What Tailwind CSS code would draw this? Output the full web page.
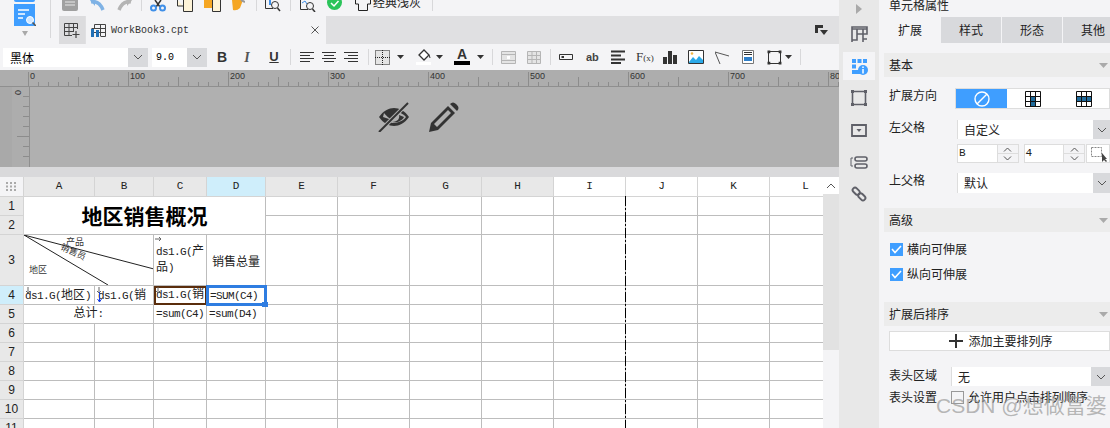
<!DOCTYPE html>
<html lang="zh">
<head>
    <meta charset="UTF-8">
    <title>WorkBook3.cpt</title>
    <script src="https://cdn.jsdelivr.net/npm/@tailwindcss/browser@4"></script>
</head>
<body class="w-[1110px] h-[428px] overflow-hidden bg-[#f4f4f6] text-[#222] font-['Noto_Sans_CJK_SC',sans-serif]">
<div class="relative flex h-[428px]">

    <!-- left: toolbars, ruler, sheet -->
    <div class="w-[839px] flex flex-col shrink-0">
        <div class="flex h-[44px]">
            <!-- logo column -->
            <div class="w-[59px] relative shrink-0">
                <div class="w-[21px] h-[2px] ml-[14px] bg-[#3f9eff] rounded-b-sm"></div>
                <svg class="ml-[14px] mt-[2px]" width="22" height="22" viewBox="0 0 22 22">
                    <path d="M0 0H21V22H0z" fill="#3f9eff"/>
                    <path d="M4 6H15M4 10H11M4 14H9" stroke="#fff" stroke-width="1.5"/>
                    <circle cx="16" cy="16" r="3.5" fill="#cfe6ff" stroke="#fff"/>
                    <path d="M18.5 18.5L22 22" stroke="#555" stroke-width="1.5"/>
                </svg>
                <svg class="ml-[21px] mt-[5px]" width="8" height="5"><path d="M1 0H7L4 5z" fill="#a9a9a9"/></svg>
                <div class="absolute left-[50px] top-0 w-px h-[38px] bg-[#d8d8da]"></div>
            </div>
            <div class="flex-1 flex flex-col">
                <!-- top icons, cut by the window edge -->
                <div class="h-[16px] flex items-start overflow-hidden text-[12px] leading-[10px]">
                    <svg class="ml-[3px]" width="16" height="11"><path d="M0 0H16V9Q16 11 14 11H2Q0 11 0 9z" fill="#a0a0a0"/><path d="M3 2H13M3 5H13" stroke="#e8e8e8"/></svg>
                    <svg class="ml-[12px]" width="15" height="11"><path d="M1 2Q9 0 13 10" fill="none" stroke="#7fb2e5" stroke-width="3.5"/><path d="M0 0H5V6z" fill="#7fb2e5"/></svg>
                    <svg class="ml-[12px]" width="15" height="11"><path d="M14 2Q6 0 2 10" fill="none" stroke="#b4b4b4" stroke-width="3.5"/><path d="M15 0H10V6z" fill="#b4b4b4"/></svg>
                    <div class="ml-[9px] w-px h-[11px] bg-[#d8d8da]"></div>
                    <svg class="ml-[8px]" width="16" height="12"><path d="M5 0L10 7M11 0L6 7" stroke="#333" stroke-width="1.5"/><circle cx="3.5" cy="8" r="2.5" fill="none" stroke="#3f8fe8" stroke-width="2"/><circle cx="12.5" cy="8" r="2.5" fill="none" stroke="#3f8fe8" stroke-width="2"/></svg>
                    <svg class="ml-[11px]" width="16" height="12"><path d="M.5 0V6H6M6.5 0V11.5H15.5V0" fill="#fdf3d8" stroke="#333"/></svg>
                    <svg class="ml-[11px]" width="17" height="12"><path d="M0 0H9V8H0z" fill="#f5a623"/><path d="M8.5 0V11.5H16.5V0" fill="#fdf3d8" stroke="#333"/></svg>
                    <svg class="ml-[10px]" width="14" height="11"><path d="M1 0H12L9 8Q6 11 2 10z" fill="#f5a623"/><path d="M10 0L14 2" stroke="#999" stroke-width="2"/></svg>
                    <div class="ml-[11px] w-px h-[11px] bg-[#d8d8da]"></div>
                    <svg class="ml-[8px]" width="16" height="12"><path d="M.5 0V8.5H8" fill="none" stroke="#333"/><path d="M5 0V5" stroke="#3f8fe8" stroke-width="2"/><circle cx="10" cy="5" r="3.5" fill="none" stroke="#333"/><path d="M12.5 8L15 11" stroke="#333" stroke-width="1.5"/></svg>
                    <div class="ml-[9px] w-px h-[11px] bg-[#d8d8da]"></div>
                    <svg class="ml-[9px]" width="16" height="12"><path d="M.5 0V9.5H8" fill="none" stroke="#333"/><path d="M2 3L5 1L7 4" fill="none" stroke="#3f8fe8"/><circle cx="10" cy="6" r="3.5" fill="none" stroke="#333"/><path d="M12.5 9L15 12" stroke="#333" stroke-width="1.5"/></svg>
                    <svg class="ml-[11px]" width="15" height="11"><circle cx="7.5" cy="2.5" r="7.5" fill="#2bc45a"/><path d="M4 3L7 6L11.5 1" fill="none" stroke="#fff" stroke-width="1.5"/></svg>
                    <svg class="ml-[13px]" width="16" height="11"><path d="M.5 0V4H3.5V10.5H12.5V4H15.5V0" fill="none" stroke="#222"/></svg>
                    <span class="ml-[2px] -mt-[3px] whitespace-nowrap">经典浅灰</span>
                    <div class="ml-[11px] w-px h-[11px] bg-[#d8d8da]"></div>
                </div>
                <!-- tab bar -->
                <div class="h-[28px] bg-[#e0e0e2] flex items-stretch">
                    <div class="w-[26px] bg-[#dcdcde] flex items-center justify-center">
                        <svg width="16" height="15"><path d="M.5 .5H13.5V6M.5 .5V12.5H8M.5 4.5H13.5M.5 8.5H9M5 .5V12.5M9.5 .5V9" fill="none" stroke="#444"/><path d="M12 8V15M8.5 11.5H15.5" stroke="#444" stroke-width="1.2"/></svg>
                    </div>
                    <div class="w-[240px] ml-px bg-[#f4f4f6] flex items-center pl-[5px]">
                        <svg width="15" height="13"><path d="M3.5 .5H14.5V12.5H10M3.5 .5V5M.5 4.5H14.5M.5 8.5H14.5M9.5 .5V12.5" fill="none" stroke="#444"/><path d="M0 5H3V13H0zM5 6H8V13H5z" fill="#1f6fb5"/></svg>
                        <span class="ml-[5px] text-[10px] font-['Liberation_Mono',monospace] text-[#333]">WorkBook3.cpt</span>
                        <svg class="ml-auto mr-[7px]" width="8" height="8"><path d="M.5 .5L7.5 7.5M7.5 .5L.5 7.5" stroke="#555"/></svg>
                    </div>
                    <svg class="ml-auto mr-[11px] mt-[9px]" width="13" height="11"><path d="M0 0H8V3H3V8H0z" fill="#333"/><path d="M5 5H13L9 10z" fill="#333"/></svg>
                </div>
            </div>
        </div>

        <!-- format toolbar -->
        <div class="h-[26px] flex items-center text-[#333]">
            <div class="ml-[3px] w-[145px] h-[19px] flex bg-white">
                <span class="flex-1 pl-[7px] text-[12px] leading-[19px] text-black">黑体</span>
                <div class="w-[20px] bg-[#d8d9dc] flex items-center justify-center"><svg width="10" height="6"><path d="M1 1L5 5L9 1" fill="none" stroke="#555"/></svg></div>
            </div>
            <div class="ml-[4px] w-[55px] h-[19px] flex bg-white">
                <span class="flex-1 pl-[4px] text-[10px] leading-[19px] text-black font-['Liberation_Mono',monospace]">9.0</span>
                <div class="w-[20px] bg-[#d8d9dc] flex items-center justify-center"><svg width="10" height="6"><path d="M1 1L5 5L9 1" fill="none" stroke="#555"/></svg></div>
            </div>
            <span class="ml-[9px] w-[12px] text-center text-[14px] font-bold font-['Liberation_Sans',sans-serif]">B</span>
            <span class="ml-[13px] w-[12px] text-center text-[14px] italic font-bold text-[#555] font-['Liberation_Serif',serif]">I</span>
            <span class="ml-[15px] w-[12px] text-center text-[13px] font-bold underline font-['Liberation_Sans',sans-serif]">U</span>
            <div class="ml-[10px] w-px h-[16px] bg-[#d8d8da]"></div>
            <svg class="ml-[9px]" width="14" height="12"><path d="M0 1.5H14M0 4.5H10M0 7.5H14M0 10.5H10" stroke="#333"/></svg>
            <svg class="ml-[8px]" width="14" height="12"><path d="M0 1.5H14M2 4.5H12M0 7.5H14M2 10.5H12" stroke="#333"/></svg>
            <svg class="ml-[8px]" width="14" height="12"><path d="M0 1.5H14M4 4.5H14M0 7.5H14M4 10.5H14" stroke="#333"/></svg>
            <div class="ml-[10px] w-px h-[16px] bg-[#d8d8da]"></div>
            <svg class="ml-[6px]" width="15" height="15"><path d="M0 0H15V15H0z" fill="#e4e4e4"/><path d="M.5 .5H14.5V14.5H.5zM7.5 0V15M0 7.5H15" fill="none" stroke="#222" stroke-dasharray="1 1"/></svg>
            <svg class="ml-[7px]" width="7" height="4"><path d="M0 0H7L3.5 4z" fill="#333"/></svg>
            <svg class="ml-[12px]" width="15" height="16"><path d="M3 6L8 1L13 6L8 11z" fill="#fff" stroke="#333" stroke-width="1.3"/><path d="M11 4Q14 6 14 9" fill="none" stroke="#333"/><path d="M0 13H15V16H0z" fill="#fff"/></svg>
            <svg class="ml-[5px]" width="7" height="4"><path d="M0 0H7L3.5 4z" fill="#333"/></svg>
            <div class="ml-[11px] w-[16px] flex flex-col items-center">
                <span class="text-[14px] leading-[11px] font-bold font-['Liberation_Sans',sans-serif]">A</span>
                <div class="mt-[1px] w-[16px] h-[4px] bg-black"></div>
            </div>
            <svg class="ml-[7px]" width="7" height="4"><path d="M0 0H7L3.5 4z" fill="#333"/></svg>
            <div class="ml-[8px] w-px h-[16px] bg-[#d8d8da]"></div>
            <svg class="ml-[8px]" width="15" height="13"><path d="M.5 .5H14.5V12.5H.5zM0 3.5H15M0 9.5H15" fill="#e4e4e4" stroke="#b5b5b5"/><path d="M6 5H9V8H6z" fill="#fff"/></svg>
            <svg class="ml-[11px]" width="14" height="13"><path d="M.5 .5H13.5V12.5H.5zM0 4.5H14M0 8.5H14M5 0V13M9.5 0V13" fill="#e4e4e4" stroke="#b5b5b5"/></svg>
            <div class="ml-[9px] w-px h-[16px] bg-[#d8d8da]"></div>
            <svg class="ml-[8px]" width="14" height="6"><path d="M.5 .5H13.5V5.5H.5z" fill="none" stroke="#333"/><path d="M2.5 2H5V4H2.5z" fill="#333"/></svg>
            <span class="ml-[13px] w-[12px] text-[11px] leading-[12px] font-bold text-[#444] font-['Liberation_Sans',sans-serif]">ab</span>
            <svg class="ml-[13px]" width="14" height="14"><path d="M0 1.5H14M0 5.5H10M0 9.5H14M0 13H10" stroke="#333" stroke-width="2"/></svg>
            <span class="ml-[11px] w-[16px] text-[13px] leading-[14px] whitespace-nowrap text-[#333] font-['Liberation_Serif',serif]">F<span class="text-[9px]">(x)</span></span>
            <svg class="ml-[11px]" width="14" height="13"><path d="M0 6H4V13H0zM5 0H9V13H5zM10 4H14V13H10z" fill="#333"/></svg>
            <svg class="ml-[11px]" width="16" height="14"><path d="M.5 .5H15.5V13.5H.5z" fill="#fff" stroke="#333"/><path d="M1 12L5 7L8 10L11 6L15 10V13H1z" fill="#2ba9e8"/><circle cx="4" cy="3.5" r="1.3" fill="#f5b642"/></svg>
            <svg class="ml-[11px]" width="14" height="13"><path d="M0 1L14 5M0 1L5 13" fill="none" stroke="#555"/></svg>
            <svg class="ml-[13px]" width="12" height="14"><path d="M.5 .5H11.5V13.5H.5z" fill="#fff" stroke="#777"/><path d="M2 2.5H10M2 4.5H10" stroke="#333"/><path d="M2 7H10V11H2z" fill="#2f7fc9"/></svg>
            <svg class="ml-[13px]" width="15" height="15"><path d="M1.5 1.5H13.5V13.5H1.5z" fill="none" stroke="#333"/><path d="M0 0H3V3H0zM12 0H15V3H12zM0 12H3V15H0zM12 12H15V15H12z" fill="#333" transform="translate(.5 .5) scale(.93)"/></svg>
            <svg class="ml-[3px]" width="7" height="4"><path d="M0 0H7L3.5 4z" fill="#333"/></svg>
            <div class="ml-[8px] w-px h-[16px] bg-[#d8d8da]"></div>
        </div>

        <!-- horizontal ruler -->
        <div class="relative h-[17px] bg-[#adadad] border-b border-[#8f8f8f] flex pl-[29px] overflow-hidden text-[9px] leading-[13px] text-[#333] font-['Liberation_Sans',sans-serif]">
            <svg class="absolute left-[28px] top-0" width="811" height="17">
                <defs>
                    <pattern id="ticks" width="100" height="17" patternUnits="userSpaceOnUse">
                        <path d="M.5 2V17M10.5 12V17M20.5 12V17M30.5 12V17M40.5 12V17M50.5 7V17M60.5 12V17M70.5 12V17M80.5 12V17M90.5 12V17" stroke="#8c8c8c"/>
                    </pattern>
                </defs>
                <rect width="811" height="17" fill="url(#ticks)"/>
            </svg>
            <span class="relative w-[100px] shrink-0 pl-[1px]">0</span>
            <span class="relative w-[100px] shrink-0 pl-[1px]">100</span>
            <span class="relative w-[100px] shrink-0 pl-[1px]">200</span>
            <span class="relative w-[100px] shrink-0 pl-[1px]">300</span>
            <span class="relative w-[100px] shrink-0 pl-[1px]">400</span>
            <span class="relative w-[100px] shrink-0 pl-[1px]">500</span>
            <span class="relative w-[100px] shrink-0 pl-[1px]">600</span>
            <span class="relative w-[100px] shrink-0 pl-[1px]">700</span>
            <span class="relative w-[10px] shrink-0 pl-[1px] overflow-hidden">80</span>
        </div>

        <!-- report header area -->
        <div class="h-[80px] flex bg-[#b0b0b0]">
            <div class="w-[12px] bg-[#a9a9a9]"></div>
            <div class="w-[18px] bg-[#adadad] border-r border-[#8f8f8f] relative text-[9px] leading-[9px] text-[#333] font-['Liberation_Sans',sans-serif]">
                <span class="absolute left-[3px] top-[1px] rotate-90">0</span>
                <svg class="absolute left-0 top-0" width="17" height="80"><path d="M11 10H17M11 20H17M11 30H17M11 40H17M5 50H17M11 60H17M11 70H17" stroke="#8c8c8c" transform="translate(0 -.5)"/></svg>
            </div>
            <div class="flex-1 flex items-start pl-[348px] pt-[15px] gap-[19px]">
                <svg width="32" height="30" viewBox="0 0 32 30">
                    <path d="M1 15C5 9 11 6 16 6s11 3 15 9c-4 6-10 9-15 9S5 21 1 15z" fill="#333"/>
                    <path d="M20 10C24 11 26 13 28 15C25 19 20 21 13 21z" fill="#b0b0b0"/>
                    <path d="M21 13C22 16 20 20 14 20C19 21 24 19 26 15z" fill="#333"/>
                    <path d="M6 11C8 13 10 16 14 18L5 15z" fill="#b0b0b0"/>
                    <path d="M2 29L30 1" stroke="#b0b0b0" stroke-width="4"/>
                    <path d="M1 30L30 1" stroke="#333" stroke-width="2"/>
                </svg>
                <svg width="30" height="30" viewBox="0 0 30 30">
                    <path d="M0 30L2 21L19 4L26 11L9 28z" fill="#333"/>
                    <path d="M5 22L19 8L22 11L8 25z" fill="#b0b0b0"/>
                    <path d="M21 2Q24 -1 27 2L28 3Q31 6 28 9z" fill="#333"/>
                </svg>
            </div>
        </div>
        <div class="h-[10px] bg-[#d9d9db]"></div>

        <!-- sheet -->
        <div class="relative h-[251px] flex overflow-hidden bg-white">
            <div class="relative w-[823px] overflow-hidden shrink-0">
                <div id="sheet" class="grid w-[842px] grid-cols-[24px_71px_59px_53px_59px_72px_72px_72px_72px_72px_72px_72px_72px] grid-rows-[20px_19px_19px_51px_19px_19px_19px_19px_19px_19px_19px_19px] text-[11px] leading-[13px] text-[#222] font-['Liberation_Mono','Noto_Sans_CJK_SC',monospace]"></div>
                <svg class="absolute left-[625px] top-[19px]" width="2" height="232"><path d="M.5 0V232" stroke="#000" stroke-width="1" stroke-dasharray="10 2 2 2"/></svg>
            </div>
            <div class="w-[16px] bg-[#f4f4f6]">
                <div class="h-[17px] bg-white flex items-center justify-center"><svg width="10" height="6"><path d="M1 5L5 1L9 5" fill="none" stroke="#555"/></svg></div>
                <div class="h-[156px] bg-[#e2e2e2]"></div>
            </div>
        </div>
    </div>

    <!-- icon strip -->
    <div class="w-[40px] shrink-0 bg-[#e8e8e8] flex flex-col items-center text-[#5f6068]">
        <div class="h-[18px] flex items-center"><svg width="6" height="10"><path d="M0 0L6 5L0 10z" fill="#a9a9a9"/></svg></div>
        <div class="h-[32px] flex items-center">
            <svg width="17" height="17"><path d="M1 1H16V3H1zM1 3V16M6 3V14H1M6 8H12M12 3V16M12 8H16V3M12 13H16" fill="none" stroke="#5f6068" stroke-width="1.6"/></svg>
        </div>
        <div class="h-[32px] flex items-center">
            <div class="w-[32px] h-[28px] bg-[#f4f4f6] flex items-center justify-center">
                <svg width="17" height="17"><path d="M1 1H5V5H1zM6.5 1H10.5V5H6.5zM12 1H16V5H12zM1 6.5H5V10.5H1zM1 12H9V16H1z" fill="#3f9eff"/><circle cx="12" cy="12" r="5" fill="#3f9eff"/><path d="M12 8.5V10M12 11V15.5" stroke="#fff" stroke-width="1.5"/></svg>
            </div>
        </div>
        <div class="h-[32px] flex items-center">
            <svg width="16" height="16"><path d="M1.5 1.5H14.5V14.5H1.5z" fill="none" stroke="#5f6068" stroke-width="1.6"/><path d="M0 0H3V3H0zM13 0H16V3H13zM0 13H3V16H0zM13 13H16V16H13z" fill="#5f6068"/></svg>
        </div>
        <div class="h-[32px] flex items-center">
            <svg width="16" height="13"><path d="M1 1H15V12H1z" fill="none" stroke="#5f6068" stroke-width="1.8"/><path d="M5.5 5H10.5L8 8z" fill="#5f6068"/></svg>
        </div>
        <div class="h-[32px] flex items-center">
            <svg width="18" height="13"><path d="M3 2H1V10H3" fill="none" stroke="#5f6068"/><rect x="5" y="1" width="12" height="4" rx="2" fill="none" stroke="#5f6068" stroke-width="1.6"/><rect x="5" y="8" width="12" height="4" rx="2" fill="none" stroke="#5f6068" stroke-width="1.6"/></svg>
        </div>
        <div class="h-[32px] flex items-center">
            <svg width="16" height="16" viewBox="-2 -2 20 20"><g fill="none" stroke="#5f6068" stroke-width="2.4" transform="rotate(45 8 8)"><rect x="-2" y="5" width="10" height="6" rx="3"/><rect x="8" y="5" width="10" height="6" rx="3"/></g></svg>
        </div>
    </div>

    <!-- properties panel -->
    <div class="w-[231px] shrink-0 text-[12px] leading-[18px] text-[#222] overflow-hidden">
        <div class="h-[17px] pl-[10px] -mt-[5px] mb-[5px] leading-[18px] pt-px">单元格属性</div>
        <div class="h-[26px] flex text-center leading-[26px]">
            <div class="w-[62px] shrink-0">扩展</div>
            <div class="w-[60px] shrink-0 bg-[#d8d9dc]">样式</div>
            <div class="w-[60px] shrink-0 ml-px bg-[#d8d9dc]">形态</div>
            <div class="w-[60px] shrink-0 ml-px bg-[#d8d9dc]">其他</div>
        </div>

        <div class="mt-[10px] ml-[5px] h-[24px] bg-[#ececec] flex items-center justify-between pl-[5px] pr-[2px]">
            <span>基本</span><svg width="9" height="5"><path d="M0 0H9L4.5 5z" fill="#aaa"/></svg>
        </div>
        <div class="mt-[11px] pl-[10px] flex items-start">
            <span class="w-[68px] leading-[14px]">扩展方向</span>
            <div class="flex-1 h-[21px] flex border border-[#ddd] bg-white">
                <div class="w-[51px] bg-[#3f9eff] flex items-center justify-center">
                    <svg width="16" height="16"><circle cx="8" cy="8" r="7" fill="none" stroke="#fff" stroke-width="1.4"/><path d="M3 13L13 3" stroke="#fff" stroke-width="1.4"/></svg>
                </div>
                <div class="w-[51px] flex items-center justify-center">
                    <svg width="16" height="16"><path d="M5 5H11V15H5z" fill="#1f6b9c"/><path d="M.5 .5H15.5V15.5H.5zM.5 5.5H15.5M.5 10.5H15.5M5.5 .5V15.5M10.5 .5V15.5" fill="none" stroke="#111"/></svg>
                </div>
                <div class="w-[51px] flex items-center justify-center">
                    <svg width="16" height="16"><path d="M1 5H15V11H1z" fill="#1f6b9c"/><path d="M.5 .5H15.5V15.5H.5zM.5 5.5H15.5M.5 10.5H15.5M5.5 .5V15.5M10.5 .5V15.5" fill="none" stroke="#111"/></svg>
                </div>
            </div>
        </div>
        <div class="mt-[11px] pl-[10px] flex items-start">
            <span class="w-[68px] leading-[14px]">左父格</span>
            <div class="flex-1 h-[19px] flex bg-white border-l border-[#ddd]">
                <span class="flex-1 pl-[6px] leading-[19px]">自定义</span>
                <div class="w-[17px] bg-[#d8d9dc] flex items-center justify-center"><svg width="10" height="6"><path d="M1 1L5 5L9 1" fill="none" stroke="#555"/></svg></div>
            </div>
        </div>
        <div class="mt-[5px] pl-[78px] flex h-[19px] text-[11px] font-['Liberation_Mono',monospace]">
            <div class="w-[41px] bg-white border border-[#ddd] pl-px leading-[17px]">B</div>
            <div class="w-[21px] flex flex-col border-y border-r border-[#ddd] bg-[#f4f4f6]">
                <div class="flex-1 flex items-center justify-center"><svg width="9" height="5"><path d="M1 4.5L4.5 1L8 4.5" fill="none" stroke="#555"/></svg></div>
                <div class="flex-1 flex items-center justify-center border-t border-[#ddd]"><svg width="9" height="5"><path d="M1 .5L4.5 4L8 .5" fill="none" stroke="#555"/></svg></div>
            </div>
            <div class="ml-[5px] w-[41px] bg-white border border-[#ddd] pl-px leading-[17px]">4</div>
            <div class="w-[21px] flex flex-col border-y border-r border-[#ddd] bg-[#f4f4f6]">
                <div class="flex-1 flex items-center justify-center"><svg width="9" height="5"><path d="M1 4.5L4.5 1L8 4.5" fill="none" stroke="#555"/></svg></div>
                <div class="flex-1 flex items-center justify-center border-t border-[#ddd]"><svg width="9" height="5"><path d="M1 .5L4.5 4L8 .5" fill="none" stroke="#555"/></svg></div>
            </div>
            <div class="ml-px flex-1 bg-white border border-[#ddd] pl-[4px] pt-[2px]">
                <svg width="18" height="15"><path d="M.5 .5H10.5V9.5H.5z" fill="none" stroke="#888" stroke-dasharray="2 1"/><path d="M11 6V15L13 13L15 15L16 14L14 12H16z" fill="#444"/></svg>
            </div>
        </div>
        <div class="mt-[10px] pl-[10px] flex items-start">
            <span class="w-[68px] leading-[14px]">上父格</span>
            <div class="flex-1 h-[20px] flex bg-white border-l border-[#ddd]">
                <span class="flex-1 pl-[6px] leading-[20px]">默认</span>
                <div class="w-[17px] bg-[#d8d9dc] flex items-center justify-center"><svg width="10" height="6"><path d="M1 1L5 5L9 1" fill="none" stroke="#555"/></svg></div>
            </div>
        </div>

        <div class="mt-[15px] ml-[5px] h-[24px] bg-[#ececec] flex items-center justify-between pl-[5px] pr-[2px]">
            <span>高级</span><svg width="9" height="5"><path d="M0 0H9L4.5 5z" fill="#aaa"/></svg>
        </div>
        <div class="mt-[7px] h-[20px] pl-[11px] flex items-center gap-[4px]">
            <div class="w-[13px] h-[13px] bg-[#3f9eff] flex items-center justify-center"><svg width="11" height="9"><path d="M1 4L4 7.5L10 1" fill="none" stroke="#fff" stroke-width="1.6"/></svg></div>
            <span>横向可伸展</span>
        </div>
        <div class="mt-[5px] h-[20px] pl-[11px] flex items-center gap-[4px]">
            <div class="w-[13px] h-[13px] bg-[#3f9eff] flex items-center justify-center"><svg width="11" height="9"><path d="M1 4L4 7.5L10 1" fill="none" stroke="#fff" stroke-width="1.6"/></svg></div>
            <span>纵向可伸展</span>
        </div>

        <div class="mt-[18px] ml-[5px] h-[24px] bg-[#ececec] flex items-center justify-between pl-[5px] pr-[2px]">
            <span>扩展后排序</span><svg width="9" height="5"><path d="M0 0H9L4.5 5z" fill="#aaa"/></svg>
        </div>
        <div class="mt-[5px] ml-[10px] h-[20px] bg-white border border-[#ddd] flex items-center justify-center gap-[5px] pl-[3px]">
            <svg width="14" height="14"><path d="M7 0V14M0 7H14" stroke="#333" stroke-width="2"/></svg>
            <span>添加主要排列序</span>
        </div>
        <div class="mt-[16px] pl-[10px] flex items-start">
            <span class="w-[62px] leading-[16px]">表头区域</span>
            <div class="flex-1 h-[19px] flex bg-white border-l border-[#ddd]">
                <span class="flex-1 pl-[6px] leading-[19px]">无</span>
                <div class="w-[19px] bg-[#d8d9dc] flex items-center justify-center"><svg width="10" height="6"><path d="M1 1L5 5L9 1" fill="none" stroke="#555"/></svg></div>
            </div>
        </div>
        <div class="mt-[2px] pl-[10px] flex items-center">
            <span class="w-[62px]">表头设置</span>
            <div class="w-[13px] h-[13px] border border-[#999] bg-[#f4f4f6]"></div>
            <span class="ml-[4px] whitespace-nowrap">允许用户点击排列顺序</span>
        </div>
    </div>

    <!-- watermark -->
    <div class="absolute left-[936px] top-[392px] text-[21px] leading-[28px] whitespace-nowrap text-[#9a9a9a]/70 font-['Liberation_Sans','Noto_Sans_CJK_SC',sans-serif]">CSDN @想做富婆</div>
</div>

<script>
    // las clases van completas para que Tailwind las vea
    const cell = 'relative border-r border-b border-[#bdbdbd] overflow-hidden whitespace-nowrap';
    const mono = 'tracking-[-0.6px]';
    const blanco = `<div class="${cell}"></div>`;
    const vacias = n => blanco.repeat(n);
    const cjk = t => `<span class="text-[12px] tracking-normal">${t}</span>`;
    const cabCol = (t, fondo) => `<div class="${fondo} border-r border-b border-[#d4d4d4] flex items-center justify-center">${t}</div>`;
    const cabFila = (t, fondo) => `<div class="${fondo} border-r border-b border-[#d4d4d4] flex items-center justify-center text-[12px] font-['Liberation_Sans',sans-serif]">${t}</div>`;

    const flecha = '<svg class="absolute left-[1px] top-[1px]" width="7" height="7"><path d="M3 0V6M1 4L3 6L5 4" fill="none" stroke="#666"/></svg>';
    const flechaDer = '<svg class="absolute left-[1px] top-[1px]" width="7" height="6"><path d="M0 3H6M4 1L6 3L4 5" fill="none" stroke="#666"/></svg>';

    let html = `<div class="bg-[#f4f4f6] border-r border-b border-[#d4d4d4] flex items-center justify-center">
        <svg width="11" height="9"><path d="M0 0H2V2H0zM4 0H6V2H4zM8 0H10V2H8zM0 3.5H2V5.5H0zM4 3.5H6V5.5H4zM8 3.5H10V5.5H8zM0 7H2V9H0zM4 7H6V9H4zM8 7H10V9H8z" fill="#aaa"/></svg></div>`;
    'ABC'.split('').forEach(c => html += cabCol(c, 'bg-[#e8e8e8]'));
    html += cabCol('D', 'bg-[#cfeefb]');
    'EFGH'.split('').forEach(c => html += cabCol(c, 'bg-[#e8e8e8]'));
    'IJKL'.split('').forEach(c => html += cabCol(c, 'bg-white'));

    // filas 1 y 2: titulo combinado
    html += cabFila('1', 'bg-[#e8e8e8]');
    html += `<div class="col-span-4 row-span-2 ${cell} flex items-center justify-center text-[21px] font-bold text-black font-['Noto_Sans_CJK_SC',sans-serif]">地区销售概况</div>`;
    html += vacias(8);
    html += cabFila('2', 'bg-[#e8e8e8]');
    html += vacias(8);

    // fila 3: cabecera con diagonales
    html += cabFila('3', 'bg-[#e8e8e8]');
    html += `<div class="col-span-2 ${cell} text-[9px] text-[#333] font-['Noto_Sans_CJK_SC',sans-serif]">
        <svg class="absolute left-0 top-0" width="130" height="51"><path d="M0 0L130 34M0 0L84 50" stroke="#222" stroke-width="1"/></svg>
        <span class="absolute left-[42px] top-[0px]">产品</span>
        <span class="absolute left-[36px] top-[10px] rotate-[25deg]">销售员</span>
        <span class="absolute left-[5px] top-[28px]">地区</span>
    </div>`;
    html += `<div class="${cell} ${mono} pt-[9px] pl-[2px] leading-[16px]">${flechaDer}ds1.G(${cjk('产')}<br>${cjk('品')})</div>`;
    html += `<div class="${cell} flex items-center justify-center text-[12px] font-['Noto_Sans_CJK_SC',sans-serif]">销售总量</div>`;
    html += vacias(8);

    // fila 4: celda activa
    html += cabFila('4', 'bg-[#cfeefb]');
    html += `<div class="${cell} ${mono} leading-[20px] pl-px">${flecha}ds1.G(${cjk('地区')})</div>`;
    html += `<div class="${cell} ${mono} leading-[20px] pl-[3px]">${flecha}<svg class="absolute left-[2px] top-[6px]" width="5" height="11"><path d="M2.5 0V10M.5 7L2.5 10L4.5 7" fill="none" stroke="#1a3fe0"/></svg>ds1.G(${cjk('销')}</div>`;
    html += `<div class="${cell} ${mono} leading-[18px] pl-[2px] outline-2 -outline-offset-2 outline-[#5a2d0c]">${flecha}ds1.G(${cjk('销')}</div>`;
    html += `<div class="relative ${mono} border-r border-b border-[#bdbdbd] leading-[20px] pl-[3px] whitespace-nowrap outline-[3px] -outline-offset-2 outline-[#2f7de1] z-10">=SUM(C4)<div class="absolute right-[-3px] bottom-[-3px] w-[6px] h-[5px] bg-[#2f7de1]"></div></div>`;
    html += vacias(8);

    // fila 5: totales
    html += cabFila('5', 'bg-[#e8e8e8]');
    html += `<div class="col-span-2 ${cell} ${mono} flex items-center justify-center">${cjk('总计')}:</div>`;
    html += `<div class="${cell} ${mono} leading-[19px] pl-[2px]">=sum(C4)</div>`;
    html += `<div class="${cell} ${mono} leading-[19px] pl-[2px]">=sum(D4)</div>`;
    html += vacias(8);

    // resto de filas vacias
    for (let i = 6; i <= 11; i++) {
        html += cabFila(String(i), 'bg-[#e8e8e8]');
        html += vacias(12);
    }
    document.getElementById('sheet').innerHTML = html;
</script>
</body>
</html>
